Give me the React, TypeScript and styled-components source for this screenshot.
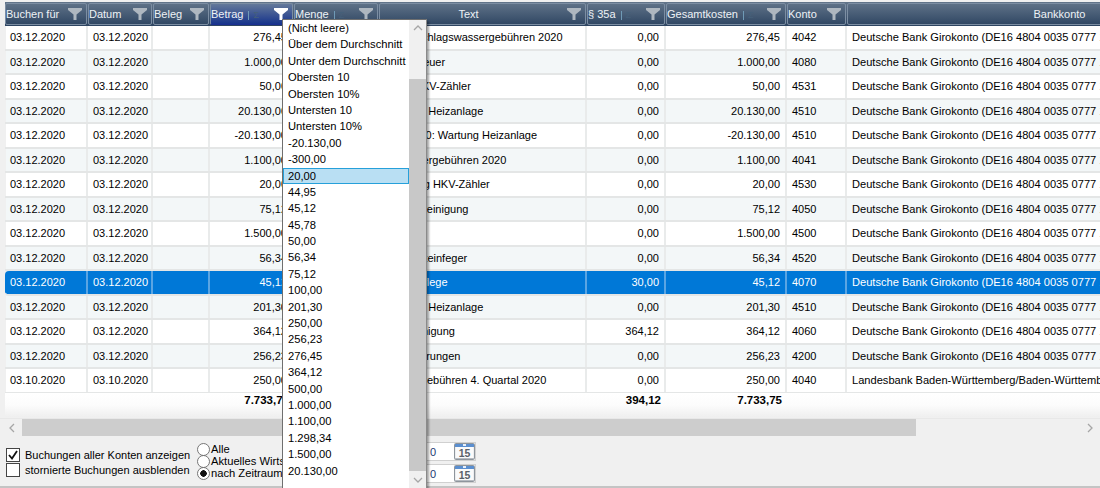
import { createGlobalStyle, styled } from "styled-components";

const GlobalStyle = createGlobalStyle`
  html, body {
    margin: 0;
    padding: 0;
    background: #f0f0f0;
    font-family: "Liberation Sans", Arial, sans-serif;
    font-size: 11px;
    color: #000;
    overflow: hidden;
  }
`;

const COLUMNS = "83px 65px 57px 84px 85px 208px 79px 121px 60px 454px";

const Page = styled.div`
  position: relative;
  width: 1100px;
  height: 488px;
  overflow: hidden;
  background: #f0f0f0;
  display: flex;
  flex-direction: column;
  padding-top: 2px;
  box-sizing: border-box;
`;

const Table = styled.div`
  height: 416px;
  padding-left: 5px;
  overflow: hidden;
`;

const HeaderRow = styled.div`
  display: grid;
  grid-template-columns: ${COLUMNS};
  width: 1296px;
  height: 24px;
  background: linear-gradient(#62758a, #2d4461);
`;

const HeaderCell = styled.div<{ $active?: boolean }>`
  display: flex;
  align-items: center;
  box-sizing: border-box;
  padding: 0 4px 0 0;
  margin: 1px 1px 1px 0;
  border: 1px solid #7c8ea3;
  border-bottom-color: ${(p) => (p.$active ? "#1b2f92" : "#7c8ea3")};
  border-radius: 2px;
  color: #eef2f6;
  white-space: nowrap;
  background: ${(p) => (p.$active ? "linear-gradient(#64799a, #17348c)" : "none")};
`;

const HeaderLabel = styled.span<{ $center?: boolean }>`
  flex: 1;
  text-align: ${(p) => (p.$center ? "center" : "left")};
  padding-right: ${(p) => (p.$center ? "10px" : "0")};
`;

const SumMark = styled.span`
  display: inline-block;
  margin-left: 5px;
  padding-left: 4px;
  border-left: 1px solid #6f9ab6;
  font-size: 9px;
  line-height: 9px;
  color: #45607a;
`;

const Row = styled.div<{ $alt?: boolean; $selected?: boolean }>`
  display: grid;
  grid-template-columns: ${COLUMNS};
  width: 1296px;
  height: 24.5px;
  box-sizing: border-box;
  border-bottom: 2px solid #e4e6e6;
  background: ${(p) => (p.$selected ? "#0078d7" : p.$alt ? "#f3f7f8" : "#fff")};
  background-clip: padding-box;
  color: ${(p) => (p.$selected ? "#fff" : "#000")};
  border-radius: ${(p) => (p.$selected ? "4px 0 0 4px" : "0")};
  box-shadow: ${(p) => (p.$selected ? "none" : "inset 1px 0 0 #f0f0f0")};
`;

const Cell = styled.div<{ $right?: boolean; $selected?: boolean }>`
  box-sizing: border-box;
  display: flex;
  align-items: center;
  justify-content: ${(p) => (p.$right ? "flex-end" : "flex-start")};
  padding: 0 5px;
  border-right: 2px solid ${(p) => (p.$selected ? "#5aa5e3" : "#e9ebeb")};
  white-space: nowrap;
  overflow: hidden;
`;

const BankCell = styled(Cell)`
  font-size: 11.1px;
`;

const TotalRow = styled.div`
  display: grid;
  grid-template-columns: ${COLUMNS};
  width: 1296px;
  height: 24px;
  margin-top: -1px;
  background: linear-gradient(#fff, #fcfcfc 50%, #efefef);
  font-weight: 700;
  font-size: 11.5px;
`;

const TotalCell = styled.div`
  display: flex;
  align-items: flex-start;
  justify-content: flex-end;
  padding: 1px 5px 0;
`;

const ScrollBar = styled.div`
  display: flex;
  align-items: center;
  height: 17px;
  background: #f0f0f0;
  border-top: 1px solid #e8e8e8;
`;

const ScrollArrow = styled.div`
  width: 22px;
  height: 17px;
  box-sizing: border-box;
  padding-left: 3px;
  display: flex;
  align-items: center;
  justify-content: center;
  color: #a6a6a6;
`;

const ScrollThumb = styled.div`
  width: 894px;
  height: 17px;
  background: #cdcdcd;
`;

const Spacer = styled.div`
  flex: 1;
`;

const BottomPanel = styled.div`
  flex: 1;
  display: flex;
  align-items: flex-start;
  box-sizing: border-box;
  padding: 8px 0 0 6px;
  border-bottom: 2px solid #c4c4c4;
`;

const CheckGroup = styled.div`
  display: flex;
  flex-direction: column;
  padding-top: 3px;
  width: 191px;
`;

const CheckLine = styled.label`
  display: flex;
  align-items: center;
  gap: 5px;
  height: 15px;
`;

const CheckBox = styled.span`
  width: 12px;
  height: 12px;
  border: 1px solid #444;
  background: #fff;
  display: flex;
  align-items: center;
  justify-content: center;
`;

const RadioGroup = styled.div`
  display: flex;
  flex-direction: column;
  width: 213px;
  margin-top: -1px;
`;

const RadioLine = styled.label`
  display: flex;
  align-items: center;
  gap: 1px;
  height: 12px;
  white-space: nowrap;
  font-size: 11.2px;
`;

const RadioDot = styled.span<{ $on?: boolean }>`
  width: 11px;
  height: 11px;
  border: 1px solid #777;
  border-radius: 50%;
  background: radial-gradient(circle, ${(p) => (p.$on ? "#111 0 3px, #fff 3.5px" : "#fff 0 100%")});
  flex: none;
`;

const DateGroup = styled.div`
  display: flex;
  flex-direction: column;
  gap: 3px;
  margin-top: -2px;
`;

const DateBox = styled.div`
  display: flex;
  align-items: center;
  justify-content: space-between;
  width: 66px;
  height: 19px;
  box-sizing: border-box;
  padding-left: 20px;
  background: #fff;
  border: 1px solid #d0d0d0;
  border-left: none;
  color: #1b3a72;
`;

const CalendarButton = styled.span`
  display: flex;
  width: 21px;
  height: 17px;
`;

const FilterMenu = styled.div`
  position: absolute;
  left: 282px;
  top: 19px;
  width: 145px;
  height: 470px;
  display: flex;
  background: #fff;
  border: 1px solid #6f6f6f;
  border-right: 1px solid #8a8a8a;
  box-sizing: border-box;
  box-shadow: 2px 2px 2px rgba(0, 0, 0, 0.35);
`;

const MenuList = styled.div`
  flex: 1;
  display: flex;
  flex-direction: column;
`;

const MenuItem = styled.div<{ $picked?: boolean }>`
  height: 16.4px;
  line-height: 16.4px;
  box-sizing: border-box;
  padding-left: 5px;
  font-size: 11.2px;
  white-space: nowrap;
  ${(p) =>
    p.$picked &&
    `
    background: #b9dff3;
    outline: 1px solid #26a0da;
    outline-offset: -1px;
  `}
`;

const MenuScroll = styled.div`
  width: 17px;
  display: flex;
  flex-direction: column;
  align-items: center;
  background: #f0f0f0;
`;

const MenuArrow = styled.div`
  height: 17px;
  display: flex;
  align-items: center;
  justify-content: center;
  color: #a6a6a6;
`;

const MenuThumbGap = styled.div`
  height: 42px;
  width: 100%;
`;

const MenuThumb = styled.div`
  flex: 1;
  width: 100%;
  background: #c8c8c8;
`;

type Col = { label: string; active?: boolean; center?: boolean; sum?: boolean };

const headers: Col[] = [
  { label: "Buchen für" },
  { label: "Datum" },
  { label: "Beleg" },
  { label: "Betrag", sum: true, active: true },
  { label: "Menge", sum: true },
  { label: "Text", center: true },
  { label: "§ 35a", sum: true },
  { label: "Gesamtkosten", sum: true },
  { label: "Konto" },
  { label: "Bankkonto", center: true },
];

const DB = "Deutsche Bank Girokonto (DE16 4804 0035 0777 15)";

const rows = [
  ["03.12.2020", "276,45", "Niederschlagswassergebühren 2020", "0,00", "276,45", "4042", DB],
  ["03.12.2020", "1.000,00", "Grundsteuer", "0,00", "1.000,00", "4080", DB],
  ["03.12.2020", "50,00", "Miete HKV-Zähler", "0,00", "50,00", "4531", DB],
  ["03.12.2020", "20.130,00", "Wartung Heizanlage", "0,00", "20.130,00", "4510", DB],
  ["03.12.2020", "-20.130,00", "Storno 20: Wartung Heizanlage", "0,00", "-20.130,00", "4510", DB],
  ["03.12.2020", "1.100,00", "Abwassergebühren 2020", "0,00", "1.100,00", "4041", DB],
  ["03.12.2020", "20,00", "Ablesung HKV-Zähler", "0,00", "20,00", "4530", DB],
  ["03.12.2020", "75,12", "Straßenreinigung", "0,00", "75,12", "4050", DB],
  ["03.12.2020", "1.500,00", "Heizöl", "0,00", "1.500,00", "4500", DB],
  ["03.12.2020", "56,34", "Schornsteinfeger", "0,00", "56,34", "4520", DB],
  ["03.12.2020", "45,12", "Gartenpflege", "30,00", "45,12", "4070", DB],
  ["03.12.2020", "201,30", "Wartung Heizanlage", "0,00", "201,30", "4510", DB],
  ["03.12.2020", "364,12", "Hausreinigung", "364,12", "364,12", "4060", DB],
  ["03.12.2020", "256,23", "Versicherungen", "0,00", "256,23", "4200", DB],
  ["03.10.2020", "250,00", "Wassergebühren 4. Quartal 2020", "0,00", "250,00", "4040", "Landesbank Baden-Württemberg/Baden-Württemberg"],
];

const menuItems = [
  "(Nicht leere)", "Über dem Durchschnitt", "Unter dem Durchschnitt", "Obersten 10", "Obersten 10%",
  "Untersten 10", "Untersten 10%", "-20.130,00", "-300,00", "20,00", "44,95", "45,12", "45,78", "50,00",
  "56,34", "75,12", "100,00", "201,30", "250,00", "256,23", "276,45", "364,12", "500,00", "1.000,00",
  "1.100,00", "1.298,34", "1.500,00", "20.130,00",
];

function FilterIcon({ color = "#aeb7c0" }: { color?: string }) {
  return (
    <svg width="14" height="12" viewBox="0 0 14 12">
      <path d="M0 0h14v2L8.500 6.500V12H5.500V6.500L0 2z" fill={color} />
    </svg>
  );
}

function Chevron({ dir }: { dir: "left" | "right" | "up" | "down" }) {
  const d = {
    left: "M6 1 2 5l4 4",
    right: "M2 1l4 4-4 4",
    up: "M1 6l4-4 4 4",
    down: "M1 3l4 4 4-4",
  }[dir];
  return (
    <svg width="10" height="10" viewBox="0 0 10 10" fill="none" stroke="currentColor" strokeWidth="1.3">
      <path d={d} />
    </svg>
  );
}

function CalendarIcon() {
  return (
    <svg width="21" height="17" viewBox="0 0 21 17">
      <rect x="0.500" y="0.500" width="20" height="16" rx="1" fill="#eceef0" stroke="#8e959c" />
      <rect x="1" y="1" width="19" height="3" fill="#5b8fd0" />
      <rect x="9" y="1" width="3" height="2" fill="#e8f0fa" />
      <rect x="2" y="4" width="17" height="11" fill="#fafafa" />
      <rect x="1" y="15" width="19" height="1" fill="#b5bac0" />
      <text x="10.500" y="14" textAnchor="middle" fontSize="10.500" fontWeight="700" fill="#5a6068" fontFamily="Liberation Sans, sans-serif">
        15
      </text>
    </svg>
  );
}

export default function App() {
  return (
    <Page>
      <GlobalStyle />
      <Table>
        <HeaderRow>
          {headers.map((h) => (
            <HeaderCell key={h.label} $active={h.active}>
              <HeaderLabel $center={h.center}>
                {h.label}
                {h.sum && <SumMark>Σ</SumMark>}
              </HeaderLabel>
              <FilterIcon color={h.active ? "#ffffff" : undefined} />
            </HeaderCell>
          ))}
        </HeaderRow>
        {rows.map((r, i) => {
          const selected = i === 10;
          return (
            <Row key={i} $alt={i % 2 === 1} $selected={selected}>
              <Cell $selected={selected}>{r[0]}</Cell>
              <Cell $selected={selected}>{r[0]}</Cell>
              <Cell $selected={selected} />
              <Cell $right $selected={selected}>{r[1]}</Cell>
              <Cell $right $selected={selected} />
              <Cell $selected={selected}>{r[2]}</Cell>
              <Cell $right $selected={selected}>{r[3]}</Cell>
              <Cell $right $selected={selected}>{r[4]}</Cell>
              <Cell $selected={selected}>{r[5]}</Cell>
              <BankCell $selected={selected}>{r[6]}</BankCell>
            </Row>
          );
        })}
        <TotalRow>
          <span />
          <span />
          <span />
          <TotalCell>7.733,75</TotalCell>
          <span />
          <span />
          <TotalCell>394,12</TotalCell>
          <TotalCell>7.733,75</TotalCell>
        </TotalRow>
      </Table>
      <ScrollBar>
        <ScrollArrow>
          <Chevron dir="left" />
        </ScrollArrow>
        <ScrollThumb />
        <Spacer />
        <ScrollArrow>
          <Chevron dir="right" />
        </ScrollArrow>
      </ScrollBar>
      <BottomPanel>
        <CheckGroup>
          <CheckLine>
            <CheckBox>
              <svg width="12" height="12" viewBox="0 0 12 12" fill="none" stroke="#111" strokeWidth="1.8">
                <path d="M2 6l3 3.500L10 2" />
              </svg>
            </CheckBox>
            Buchungen aller Konten anzeigen
          </CheckLine>
          <CheckLine>
            <CheckBox />
            stornierte Buchungen ausblenden
          </CheckLine>
        </CheckGroup>
        <RadioGroup>
          <RadioLine>
            <RadioDot />
            Alle
          </RadioLine>
          <RadioLine>
            <RadioDot />
            Aktuelles Wirtschaftsjahr
          </RadioLine>
          <RadioLine>
            <RadioDot $on />
            nach Zeitraum
          </RadioLine>
        </RadioGroup>
        <DateGroup>
          <DateBox>
            <span>0</span>
            <CalendarButton>
              <CalendarIcon />
            </CalendarButton>
          </DateBox>
          <DateBox>
            <span>0</span>
            <CalendarButton>
              <CalendarIcon />
            </CalendarButton>
          </DateBox>
        </DateGroup>
      </BottomPanel>
      <FilterMenu>
        <MenuList>
          {menuItems.map((m) => (
            <MenuItem key={m} $picked={m === "20,00"}>
              {m}
            </MenuItem>
          ))}
        </MenuList>
        <MenuScroll>
          <MenuArrow>
            <Chevron dir="up" />
          </MenuArrow>
          <MenuThumbGap />
          <MenuThumb />
          <MenuArrow>
            <Chevron dir="down" />
          </MenuArrow>
        </MenuScroll>
      </FilterMenu>
    </Page>
  );
}
